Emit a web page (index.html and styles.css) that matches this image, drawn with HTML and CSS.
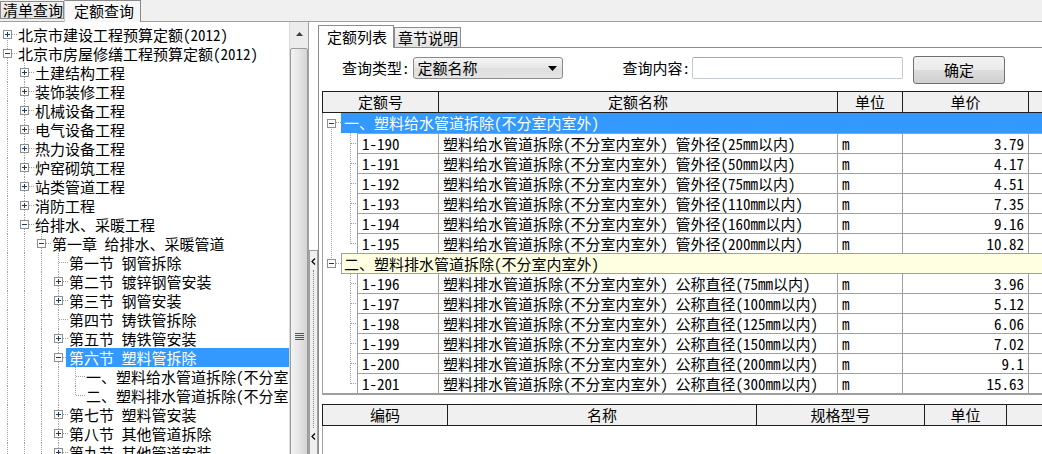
FILE: index.html
```html
<!DOCTYPE html>
<html lang="zh-CN">
<head>
<meta charset="utf-8">
<title>定额查询</title>
<link rel="stylesheet" href="styles.css">
</head>
<body>
<div class="app">
  <div class="topbar">
    <div class="ttab">清单查询</div>
    <div class="ttab on">定额查询</div>
  </div>
  <div class="main">
    <div class="left">
      <div class="tree">
        <div class="tr"><span class="nd first"><svg class="bx" width="9" height="9" viewBox="0 0 9 9"><rect class="bxr" x=".5" y=".5" width="8" height="8"/><path class="bxs" d="M2 4.5h5M4.5 2v5"/></svg></span><span class="lb">北京市建设工程预算定额(2012)</span></div>
        <div class="tr"><span class="nd"><svg class="bx" width="9" height="9" viewBox="0 0 9 9"><rect class="bxr" x=".5" y=".5" width="8" height="8"/><path class="bxs" d="M2 4.5h5"/></svg></span><span class="lb">北京市房屋修缮工程预算定额(2012)</span></div>
        <div class="tr"><span class="g"></span><span class="nd"><svg class="bx" width="9" height="9" viewBox="0 0 9 9"><rect class="bxr" x=".5" y=".5" width="8" height="8"/><path class="bxs" d="M2 4.5h5M4.5 2v5"/></svg></span><span class="lb">土建结构工程</span></div>
        <div class="tr"><span class="g"></span><span class="nd"><svg class="bx" width="9" height="9" viewBox="0 0 9 9"><rect class="bxr" x=".5" y=".5" width="8" height="8"/><path class="bxs" d="M2 4.5h5M4.5 2v5"/></svg></span><span class="lb">装饰装修工程</span></div>
        <div class="tr"><span class="g"></span><span class="nd"><svg class="bx" width="9" height="9" viewBox="0 0 9 9"><rect class="bxr" x=".5" y=".5" width="8" height="8"/><path class="bxs" d="M2 4.5h5M4.5 2v5"/></svg></span><span class="lb">机械设备工程</span></div>
        <div class="tr"><span class="g"></span><span class="nd"><svg class="bx" width="9" height="9" viewBox="0 0 9 9"><rect class="bxr" x=".5" y=".5" width="8" height="8"/><path class="bxs" d="M2 4.5h5M4.5 2v5"/></svg></span><span class="lb">电气设备工程</span></div>
        <div class="tr"><span class="g"></span><span class="nd"><svg class="bx" width="9" height="9" viewBox="0 0 9 9"><rect class="bxr" x=".5" y=".5" width="8" height="8"/><path class="bxs" d="M2 4.5h5M4.5 2v5"/></svg></span><span class="lb">热力设备工程</span></div>
        <div class="tr"><span class="g"></span><span class="nd"><svg class="bx" width="9" height="9" viewBox="0 0 9 9"><rect class="bxr" x=".5" y=".5" width="8" height="8"/><path class="bxs" d="M2 4.5h5M4.5 2v5"/></svg></span><span class="lb">炉窑砌筑工程</span></div>
        <div class="tr"><span class="g"></span><span class="nd"><svg class="bx" width="9" height="9" viewBox="0 0 9 9"><rect class="bxr" x=".5" y=".5" width="8" height="8"/><path class="bxs" d="M2 4.5h5M4.5 2v5"/></svg></span><span class="lb">站类管道工程</span></div>
        <div class="tr"><span class="g"></span><span class="nd"><svg class="bx" width="9" height="9" viewBox="0 0 9 9"><rect class="bxr" x=".5" y=".5" width="8" height="8"/><path class="bxs" d="M2 4.5h5M4.5 2v5"/></svg></span><span class="lb">消防工程</span></div>
        <div class="tr"><span class="g"></span><span class="nd"><svg class="bx" width="9" height="9" viewBox="0 0 9 9"><rect class="bxr" x=".5" y=".5" width="8" height="8"/><path class="bxs" d="M2 4.5h5"/></svg></span><span class="lb">给排水、采暖工程</span></div>
        <div class="tr"><span class="g"></span><span class="g"></span><span class="nd"><svg class="bx" width="9" height="9" viewBox="0 0 9 9"><rect class="bxr" x=".5" y=".5" width="8" height="8"/><path class="bxs" d="M2 4.5h5"/></svg></span><span class="lb">第一章 给排水、采暖管道</span></div>
        <div class="tr"><span class="g"></span><span class="g"></span><span class="g"></span><span class="nd"></span><span class="lb">第一节 钢管拆除</span></div>
        <div class="tr"><span class="g"></span><span class="g"></span><span class="g"></span><span class="nd"><svg class="bx" width="9" height="9" viewBox="0 0 9 9"><rect class="bxr" x=".5" y=".5" width="8" height="8"/><path class="bxs" d="M2 4.5h5M4.5 2v5"/></svg></span><span class="lb">第二节 镀锌钢管安装</span></div>
        <div class="tr"><span class="g"></span><span class="g"></span><span class="g"></span><span class="nd"><svg class="bx" width="9" height="9" viewBox="0 0 9 9"><rect class="bxr" x=".5" y=".5" width="8" height="8"/><path class="bxs" d="M2 4.5h5M4.5 2v5"/></svg></span><span class="lb">第三节 钢管安装</span></div>
        <div class="tr"><span class="g"></span><span class="g"></span><span class="g"></span><span class="nd"></span><span class="lb">第四节 铸铁管拆除</span></div>
        <div class="tr"><span class="g"></span><span class="g"></span><span class="g"></span><span class="nd"><svg class="bx" width="9" height="9" viewBox="0 0 9 9"><rect class="bxr" x=".5" y=".5" width="8" height="8"/><path class="bxs" d="M2 4.5h5M4.5 2v5"/></svg></span><span class="lb">第五节 铸铁管安装</span></div>
        <div class="tr sel"><span class="g"></span><span class="g"></span><span class="g"></span><span class="nd"><svg class="bx" width="9" height="9" viewBox="0 0 9 9"><rect class="bxr" x=".5" y=".5" width="8" height="8"/><path class="bxs" d="M2 4.5h5"/></svg></span><span class="lb">第六节 塑料管拆除</span></div>
        <div class="tr"><span class="g"></span><span class="g"></span><span class="g"></span><span class="g"></span><span class="nd"></span><span class="lb">一、塑料给水管道拆除(不分室内室外)</span></div>
        <div class="tr"><span class="g"></span><span class="g"></span><span class="g"></span><span class="g"></span><span class="nd last"></span><span class="lb">二、塑料排水管道拆除(不分室内室外)</span></div>
        <div class="tr"><span class="g"></span><span class="g"></span><span class="g"></span><span class="nd"><svg class="bx" width="9" height="9" viewBox="0 0 9 9"><rect class="bxr" x=".5" y=".5" width="8" height="8"/><path class="bxs" d="M2 4.5h5M4.5 2v5"/></svg></span><span class="lb">第七节 塑料管安装</span></div>
        <div class="tr"><span class="g"></span><span class="g"></span><span class="g"></span><span class="nd"><svg class="bx" width="9" height="9" viewBox="0 0 9 9"><rect class="bxr" x=".5" y=".5" width="8" height="8"/><path class="bxs" d="M2 4.5h5M4.5 2v5"/></svg></span><span class="lb">第八节 其他管道拆除</span></div>
        <div class="tr"><span class="g"></span><span class="g"></span><span class="g"></span><span class="nd"><svg class="bx" width="9" height="9" viewBox="0 0 9 9"><rect class="bxr" x=".5" y=".5" width="8" height="8"/><path class="bxs" d="M2 4.5h5M4.5 2v5"/></svg></span><span class="lb">第九节 其他管道安装</span></div>
      </div>
      <div class="vscroll">
        <div class="sbtn"><svg width="7" height="4" viewBox="0 0 7 4"><path d="M0 4L3.5 0L7 4z" fill="#404040"/></svg></div>
        <div class="thumb"><svg width="9" height="7" viewBox="0 0 9 7"><path d="M0 .5h9M0 2.5h9M0 4.5h9M0 6.5h9" stroke="#555" stroke-width="1"/></svg></div>
      </div>
    </div>
    <div class="split">
      <div class="splbox">
        <svg width="5" height="7" viewBox="0 0 5 7"><path d="M4 0.5L1 3.5L4 6.5" fill="none" stroke="#000" stroke-width="1.2"/></svg>
        <div class="spline"></div>
        <svg width="5" height="7" viewBox="0 0 5 7"><path d="M4 0.5L1 3.5L4 6.5" fill="none" stroke="#000" stroke-width="1.2"/></svg>
      </div>
    </div>
    <div class="rpanel">
      <div class="rtabs">
        <div class="rtab on">定额列表</div>
        <div class="rtab">章节说明</div>
      </div>
      <div class="page">
        <div class="query">
          <span class="qlabel">查询类型:</span>
          <div class="dd"><span>定额名称</span><svg width="9" height="5" viewBox="0 0 9 5"><path d="M0 0h9L4.5 5z" fill="#000"/></svg></div>
          <span class="qlabel q2">查询内容:</span>
          <div class="inp"></div>
          <div class="btn">确定</div>
        </div>

        <div class="grid">
          <div class="gh">
            <span class="hc w1">定额号</span><span class="hc w2">定额名称</span><span class="hc w3">单位</span><span class="hc w4">单价</span><span class="hc wr"></span>
          </div>
          <div class="gr blue">
            <span class="gbox g1"><svg class="bx" width="9" height="9" viewBox="0 0 9 9"><rect class="bxr" x=".5" y=".5" width="8" height="8"/><path class="bxs" d="M2 4.5h5"/></svg></span>
            <span class="glab">一、塑料给水管道拆除(不分室内室外)</span>
          </div>
          <div class="r"><span class="lead a"></span><span class="c code">1-190</span><span class="c name">塑料给水管道拆除(不分室内室外) 管外径(25mm以内)</span><span class="c unit">m</span><span class="c price">3.79</span><span class="c rest"></span></div>
          <div class="r"><span class="lead a"></span><span class="c code">1-191</span><span class="c name">塑料给水管道拆除(不分室内室外) 管外径(50mm以内)</span><span class="c unit">m</span><span class="c price">4.17</span><span class="c rest"></span></div>
          <div class="r"><span class="lead a"></span><span class="c code">1-192</span><span class="c name">塑料给水管道拆除(不分室内室外) 管外径(75mm以内)</span><span class="c unit">m</span><span class="c price">4.51</span><span class="c rest"></span></div>
          <div class="r"><span class="lead a"></span><span class="c code">1-193</span><span class="c name">塑料给水管道拆除(不分室内室外) 管外径(110mm以内)</span><span class="c unit">m</span><span class="c price">7.35</span><span class="c rest"></span></div>
          <div class="r"><span class="lead a"></span><span class="c code">1-194</span><span class="c name">塑料给水管道拆除(不分室内室外) 管外径(160mm以内)</span><span class="c unit">m</span><span class="c price">9.16</span><span class="c rest"></span></div>
          <div class="r"><span class="lead a last"></span><span class="c code">1-195</span><span class="c name">塑料给水管道拆除(不分室内室外) 管外径(200mm以内)</span><span class="c unit">m</span><span class="c price">10.82</span><span class="c rest"></span></div>
          <div class="gr yel">
            <span class="gbox g2"><svg class="bx" width="9" height="9" viewBox="0 0 9 9"><rect class="bxr" x=".5" y=".5" width="8" height="8"/><path class="bxs" d="M2 4.5h5"/></svg></span>
            <span class="glab">二、塑料排水管道拆除(不分室内室外)</span>
          </div>
          <div class="r nt"><span class="lead b"></span><span class="c code">1-196</span><span class="c name">塑料排水管道拆除(不分室内室外) 公称直径(75mm以内)</span><span class="c unit">m</span><span class="c price">3.96</span><span class="c rest"></span></div>
          <div class="r"><span class="lead b"></span><span class="c code">1-197</span><span class="c name">塑料排水管道拆除(不分室内室外) 公称直径(100mm以内)</span><span class="c unit">m</span><span class="c price">5.12</span><span class="c rest"></span></div>
          <div class="r"><span class="lead b"></span><span class="c code">1-198</span><span class="c name">塑料排水管道拆除(不分室内室外) 公称直径(125mm以内)</span><span class="c unit">m</span><span class="c price">6.06</span><span class="c rest"></span></div>
          <div class="r"><span class="lead b"></span><span class="c code">1-199</span><span class="c name">塑料排水管道拆除(不分室内室外) 公称直径(150mm以内)</span><span class="c unit">m</span><span class="c price">7.02</span><span class="c rest"></span></div>
          <div class="r"><span class="lead b"></span><span class="c code">1-200</span><span class="c name">塑料排水管道拆除(不分室内室外) 公称直径(200mm以内)</span><span class="c unit">m</span><span class="c price">9.1</span><span class="c rest"></span></div>
          <div class="r"><span class="lead b last"></span><span class="c code">1-201</span><span class="c name">塑料排水管道拆除(不分室内室外) 公称直径(300mm以内)</span><span class="c unit">m</span><span class="c price">15.63</span><span class="c rest"></span></div>
        </div>

        <div class="grid2">
          <div class="gh">
            <span class="hc v1">编码</span><span class="hc v2">名称</span><span class="hc v3">规格型号</span><span class="hc v4">单位</span><span class="hc wr"></span>
          </div>
          <div class="g2body"></div>
        </div>
      </div>
    </div>
  </div>
</div>
</body>
</html>
```

FILE: styles.css
```css
* { box-sizing: border-box; }
html, body { margin: 0; padding: 0; }
body {
  width: 1042px;
  height: 454px;
  overflow: hidden;
  background: #f0f0f0;
  font-family: "Noto Sans Mono CJK SC", "Noto Sans CJK SC", sans-serif;
  font-size: 15px;
  color: #000;
  --vd: repeating-linear-gradient(to bottom, #a0a0a0 0 1px, transparent 1px 2px);
  --hd: repeating-linear-gradient(to right, #a0a0a0 0 1px, transparent 1px 2px);
}
.app { display: flex; flex-direction: column; height: 454px; }

/* top tabs */
.topbar {
  display: flex;
  align-items: flex-start;
  height: 22px;
  flex: none;
  border-bottom: 1px solid #a0a0a0;
}
.ttab {
  height: 18px;
  margin-top: 1px;
  padding: 0 0 0 2px;
  width: 64px;
  line-height: 16px;
  border: 1px solid #8a8a8a;
  background: linear-gradient(#f2f2f2, #e2e2e2);
  white-space: nowrap;
}
.ttab.on {
  width: 77px;
  height: 22px;
  margin-top: 0;
  margin-bottom: -1px;
  padding-left: 9px;
  line-height: 19px;
  border-bottom: none;
  border-left-color: #c8c8c8;
  background: #f8f8f8;
}

.main { display: flex; flex: 1; min-height: 0; }

/* left tree */
.left { display: flex; width: 308px; flex: none; }
.tree {
  width: 289px;
  background: #fff;
  padding-top: 3px;
  overflow: hidden;
  white-space: nowrap;
}
.tr { display: flex; height: 19px; align-items: center; }
.g, .nd { flex: none; width: 17px; height: 19px; }
.g { background: var(--vd) 7px 0 / 1px 100% no-repeat; }
.nd {
  display: flex;
  align-items: center;
  padding-left: 3px;
  background: var(--vd) 7px 0 / 1px 100% no-repeat, var(--hd) 8px 9px / 9px 1px no-repeat;
}
.nd.last { background: var(--vd) 7px 0 / 1px 10px no-repeat, var(--hd) 8px 9px / 9px 1px no-repeat; }
.nd.first { background: var(--vd) 7px 9px / 1px 10px no-repeat, var(--hd) 8px 9px / 9px 1px no-repeat; }
.bx { display: block; shape-rendering: crispEdges; }
.bxr { fill: #fbfbfb; stroke: #8f8f8f; }
.bxs { stroke: #1f3a5f; stroke-width: 1; fill: none; }
.lb { line-height: 19px; padding: 0 2px 0 1px; white-space: pre; }
.tr.sel .lb {
  flex: 1;
  margin-left: -2px;
  padding-left: 3px;
  background: #3399ff;
  color: #fff;
}

/* scrollbar */
.vscroll {
  width: 19px;
  flex: none;
  display: flex;
  flex-direction: column;
  background: #ececec;
  border-left: 1px solid #d9d9d9;
  overflow: hidden;
}
.sbtn {
  height: 25px;
  flex: none;
  display: flex;
  align-items: center;
  justify-content: center;
  padding-bottom: 1px;
}
.thumb {
  flex: 1;
  margin: 1px 0 -20px 0;
  border: 1px solid #9c9c9c;
  border-radius: 2px;
  background: linear-gradient(to right, #f3f3f3, #e6e6e6 50%, #d4d4d4);
  display: flex;
  justify-content: center;
  padding-top: 284px;
}

/* splitter */
.split {
  width: 10px;
  flex: none;
  border-left: 1px solid #a0a0a0;
  background: #fff;
  display: flex;
  flex-direction: column;
  padding-top: 228px;
}
.splbox {
  flex: 1;
  border: 1px solid #a0a0a0;
  border-bottom: none;
  background: #f0f0f0;
  display: flex;
  flex-direction: column;
  align-items: center;
  padding-top: 7px;
  padding-bottom: 14px;
}
.spline {
  flex: 1;
  width: 0;
  margin: 5px 0 5px 0;
  border-left: 1px dotted #3399ff;
}

/* right */
.rpanel {
  flex: 1;
  min-width: 0;
  display: flex;
  flex-direction: column;
  background: #fff;
}
.rtabs {
  height: 26px;
  flex: none;
  display: flex;
  align-items: flex-end;
  border-bottom: 1px solid #8c8c8c;
}
.rtab {
  height: 20px;
  width: 67px;
  padding-left: 3px;
  line-height: 19px;
  border: 1px solid #8c8c8c;
  border-bottom: none;
  background: linear-gradient(#f4f4f4, #e2e2e2);
  white-space: nowrap;
}
.rtab.on {
  width: 76px;
  height: 23px;
  margin-bottom: -1px;
  padding-left: 8px;
  line-height: 21px;
  background: #fff;
}
.page {
  flex: 1;
  min-height: 0;
  display: flex;
  flex-direction: column;
  border-left: 1px solid #8c8c8c;
  background: #fff;
  overflow: hidden;
}

/* query */
.query {
  display: flex;
  align-items: flex-start;
  height: 28px;
  flex: none;
  margin-top: 8px;
  padding-left: 23px;
  white-space: nowrap;
}
.qlabel { line-height: 22px; margin-top: 1px; }
.q2 { margin-left: 60px; }
.dd {
  margin: 1px 0 0 3px;
  width: 150px;
  height: 22px;
  border: 1px solid #8a8a8a;
  border-radius: 3px;
  background: linear-gradient(#f6f6f6, #e6e6e6 50%, #dedede 51%, #e4e4e4);
  display: flex;
  align-items: center;
  justify-content: space-between;
  padding: 0 5px 0 4px;
  line-height: 20px;
}
.inp {
  margin: 1px 0 0 2px;
  width: 211px;
  height: 22px;
  border: 1px solid #c5c9d0;
  border-top-color: #a8abb2;
  border-radius: 2px;
  background: #fff;
}
.btn {
  margin-left: 10px;
  width: 92px;
  height: 28px;
  border: 1px solid #707070;
  border-radius: 3px;
  background: linear-gradient(#f2f2f2, #ebebeb 50%, #dddddd 51%, #cfcfcf);
  text-align: center;
  line-height: 26px;
}

/* main grid */
.grid {
  flex: none;
  margin: 7px 0 0 3px;
  display: flex;
  flex-direction: column;
  border-bottom: 2px solid #a0a0a0;
  white-space: pre;
  overflow: hidden;
}
.gh {
  display: flex;
  height: 22px;
  flex: none;
  border-top: 1px solid #1e1e1e;
  border-bottom: 1px solid #1e1e1e;
  background: #f0f0f0;
}
.hc {
  flex: none;
  border-left: 1px solid #1e1e1e;
  text-align: center;
  line-height: 20px;
}
.w1 { width: 116px; }
.w2 { width: 399px; }
.w3 { width: 65px; }
.w4 { width: 126px; }
.wr { flex: 1; }

.gr {
  display: flex;
  height: 20px;
  border-left: 1px solid #a0a0a0;
}
.gbox {
  flex: none;
  width: 18px;
  display: flex;
  align-items: center;
  padding-left: 4px;
}
.g1 { background: var(--vd) 8px 14px / 1px 6px no-repeat, var(--hd) 13px 9px / 5px 1px no-repeat; }
.g2 { background: var(--vd) 8px 0 / 1px 5px no-repeat, var(--hd) 13px 10px / 5px 1px no-repeat; }
.glab {
  flex: 1;
  padding-left: 3px;
  line-height: 20px;
}
.gr.blue .glab { background: #3399ff; color: #fff; }
.gr.yel { height: 21px; }
.gr.yel .glab {
  background: #ffffe1;
  border: 1px solid #a0a0a0;
  border-right: none;
  padding-left: 2px;
  line-height: 19px;
}

.r {
  display: flex;
  height: 20px;
  border-left: 1px solid #a0a0a0;
}
.r.nt { height: 19px; }
.lead { flex: none; width: 34px; }
.lead.a { background: var(--vd) 8px 0 / 1px 100% no-repeat, var(--vd) 27px 0 / 1px 100% no-repeat, var(--hd) 28px 10px / 6px 1px no-repeat; }
.lead.a.last { background: var(--vd) 8px 0 / 1px 100% no-repeat, var(--vd) 27px 0 / 1px 11px no-repeat, var(--hd) 28px 10px / 6px 1px no-repeat; }
.lead.b { background: var(--vd) 27px 0 / 1px 100% no-repeat, var(--hd) 28px 10px / 6px 1px no-repeat; }
.lead.b.last { background: var(--vd) 27px 0 / 1px 11px no-repeat, var(--hd) 28px 10px / 6px 1px no-repeat; }
.r.nt .lead.b { background: var(--vd) 27px 0 / 1px 100% no-repeat, var(--hd) 28px 9px / 6px 1px no-repeat; }
.c {
  flex: none;
  border-top: 1px solid #a0a0a0;
  border-left: 1px solid #a0a0a0;
  line-height: 19px;
  padding-left: 4px;
  overflow: hidden;
}
.r.nt .c { border-top: none; }
.code { width: 81px; }
.name { width: 399px; }
.unit { width: 65px; }
.price { width: 126px; text-align: right; padding: 0 4px 0 0; }
.rest { flex: 1; }

/* bottom grid */
.grid2 {
  flex: 1;
  min-height: 0;
  margin: 9px 0 0 3px;
  display: flex;
  flex-direction: column;
  white-space: nowrap;
}
.v1 { width: 125px; }
.v2 { width: 309px; }
.v3 { width: 168px; }
.v4 { width: 82px; }
.g2body { flex: 1; border-left: 1px solid #a0a0a0; background: #fff; }
```
